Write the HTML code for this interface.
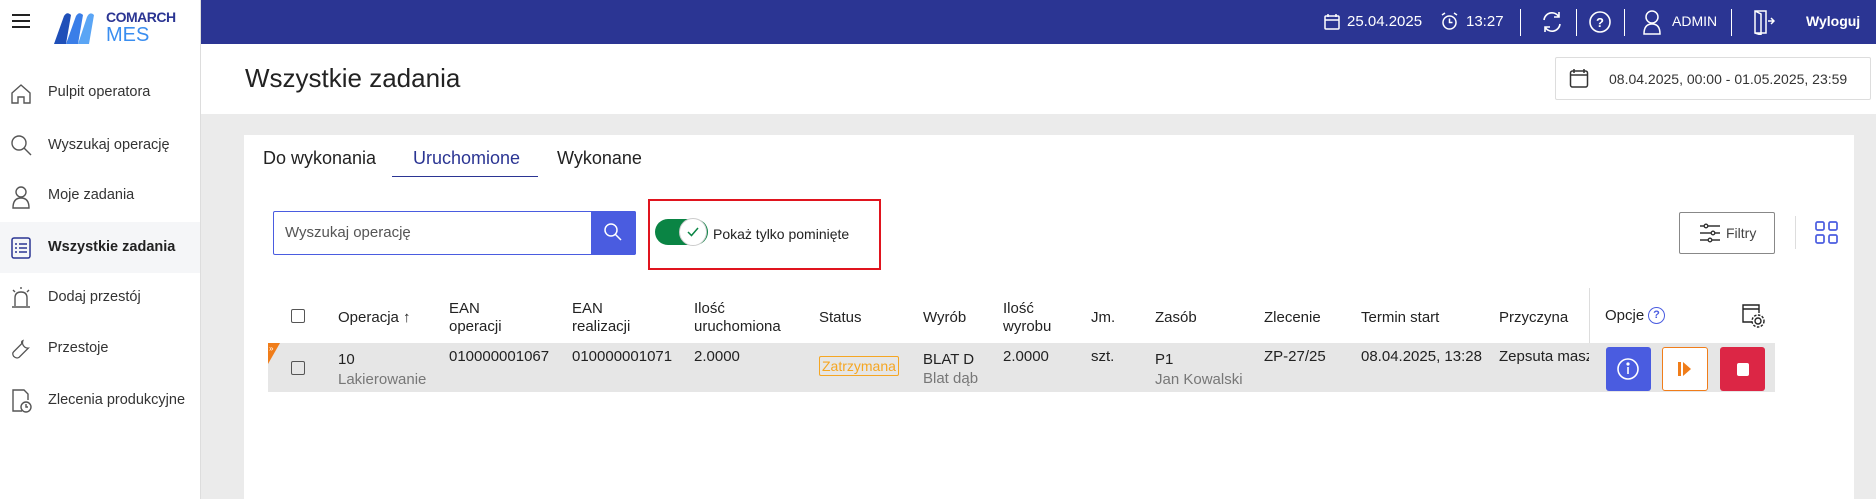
<!DOCTYPE html>
<html><head><meta charset="utf-8"><style>
*{margin:0;padding:0;box-sizing:border-box}
body{width:1876px;height:499px;overflow:hidden;font-family:"Liberation Sans",sans-serif;color:#222;background:#ebebeb;position:relative;font-size:15px}
.a{position:absolute;white-space:nowrap}
.hdr{left:0;top:0;width:1876px;height:44px;background:#2b3593}
.side{left:0;top:0;width:201px;height:499px;background:#fff;border-right:1px solid #ddd}
.wt{color:#fff;font-size:15px}
.vd{width:1px;height:27px;background:#fff;top:9px}
.nav{left:48px;font-size:14.5px;color:#333}
.th{font-size:15px;color:#222;line-height:18px}
.sub{color:#777}
</style></head><body>
<div class="a hdr"></div>
<div class="a side"></div>
<!-- logo -->
<div class="a" style="left:12px;top:14px;width:18px;height:2px;background:#222;box-shadow:0 6px 0 #222,0 12px 0 #222"></div>
<svg class="a" style="left:52px;top:11px" width="44" height="34" viewBox="0 0 44 34"><path d="M2 33 L12 5 Q15 0 19 4 L14 33 Z" fill="#1f4fb8"/><path d="M14 33 L24 5 Q27 0 31 4 L26 33Z" fill="#3a7ee8"/><path d="M26 33 L35 6 Q38 0 42 4 L37 33Z" fill="#5aa5f5"/></svg>
<div class="a" style="left:106px;top:9px;font-weight:bold;font-size:14px;color:#2b3593;letter-spacing:-0.5px">COMARCH</div>
<div class="a" style="left:106px;top:24px;font-size:20px;color:#3a8ef0">MES</div>
<!-- sidebar -->
<div class="a" style="left:0;top:222px;width:200px;height:51px;background:#f5f6f8"></div>
<svg class="a" style="left:9px;top:82px" width="24" height="24" viewBox="0 0 24 24" fill="none" stroke="#555" stroke-width="1.4"><path d="M3 11 L12 3 L21 11 V21 H15 V15 H9 V21 H3Z"/></svg>
<div class="a nav" style="top:84px">Pulpit operatora</div>
<svg class="a" style="left:9px;top:133px" width="24" height="24" viewBox="0 0 24 24" fill="none" stroke="#555" stroke-width="1.4"><circle cx="10" cy="10" r="7"/><path d="M15 15 L22 22"/></svg>
<div class="a nav" style="top:137px">Wyszukaj operację</div>
<svg class="a" style="left:10px;top:185px" width="22" height="24" viewBox="0 0 22 24" fill="none" stroke="#555" stroke-width="1.4"><circle cx="11" cy="7" r="5"/><path d="M3 23 Q3 13 11 13 Q19 13 19 23Z"/></svg>
<div class="a nav" style="top:187px">Moje zadania</div>
<svg class="a" style="left:10px;top:236px" width="22" height="24" viewBox="0 0 22 24" fill="none" stroke="#2b3593" stroke-width="1.5"><rect x="2" y="2" width="18" height="20" rx="2"/><path d="M5 8h2M9 8h8M5 12h2M9 12h8M5 16h2M9 16h8"/></svg>
<div class="a nav" style="top:239px;font-weight:bold;color:#222">Wszystkie zadania</div>
<svg class="a" style="left:10px;top:286px" width="22" height="24" viewBox="0 0 22 24" fill="none" stroke="#555" stroke-width="1.4"><path d="M5 20 V12 Q5 6 11 6 Q17 6 17 12 V20 M2 21 H20 M11 1 V3 M3 4 L5 6 M19 4 L17 6"/></svg>
<div class="a nav" style="top:289px">Dodaj przestój</div>
<svg class="a" style="left:10px;top:337px" width="22" height="24" viewBox="0 0 24 24" fill="none" stroke="#555" stroke-width="1.4"><path d="M14 3 A6 6 0 0 0 20 11 L10 21 Q7 23 4 20 Q2 17 4 15 L13 6 Q12 4 14 3Z"/></svg>
<div class="a nav" style="top:340px">Przestoje</div>
<svg class="a" style="left:10px;top:388px" width="22" height="26" viewBox="0 0 22 26" fill="none" stroke="#555" stroke-width="1.4"><path d="M12 23 H3 V2 H14 L18 6 V12"/><circle cx="16" cy="19" r="5"/><path d="M16 16v3h2"/></svg>
<div class="a nav" style="top:392px">Zlecenia produkcyjne</div>
<!-- top bar right -->
<svg class="a" style="left:1323px;top:13px" width="18" height="18" viewBox="0 0 18 18" fill="none" stroke="#fff" stroke-width="1.5"><rect x="2" y="3" width="14" height="13" rx="1"/><path d="M2 7h14M5 1v3M13 1v3"/></svg>
<div class="a wt" style="left:1347px;top:13px">25.04.2025</div>
<svg class="a" style="left:1440px;top:12px" width="19" height="19" viewBox="0 0 19 19" fill="none" stroke="#fff" stroke-width="1.5"><circle cx="9.5" cy="10.5" r="6.5"/><path d="M9.5 6.5v4h3M2 3l3-2M17 3l-3-2"/></svg>
<div class="a wt" style="left:1466px;top:13px">13:27</div>
<div class="a vd" style="left:1520px"></div>
<svg class="a" style="left:1540px;top:10px" width="24" height="24" viewBox="0 0 24 24" fill="none" stroke="#fff" stroke-width="1.6"><path d="M4 10 A8 8 0 0 1 19 7 M20 14 A8 8 0 0 1 5 17 M19 2v5h-5 M5 22v-5h5"/></svg>
<div class="a vd" style="left:1576px"></div>
<svg class="a" style="left:1588px;top:10px" width="24" height="24" viewBox="0 0 24 24" fill="none" stroke="#fff" stroke-width="1.6"><circle cx="12" cy="12" r="10"/><text x="12" y="17" text-anchor="middle" fill="#fff" stroke="none" font-size="13" font-weight="bold" font-family="Liberation Sans">?</text></svg>
<div class="a vd" style="left:1624px"></div>
<svg class="a" style="left:1642px;top:9px" width="20" height="26" viewBox="0 0 20 26" fill="none" stroke="#fff" stroke-width="1.5"><circle cx="10" cy="8" r="6"/><path d="M2 25 Q2 15 10 15 Q18 15 18 25Z"/></svg>
<div class="a wt" style="left:1672px;top:13px;font-size:14px">ADMIN</div>
<div class="a vd" style="left:1731px"></div>
<svg class="a" style="left:1753px;top:9px" width="22" height="26" viewBox="0 0 22 26" fill="none" stroke="#fff" stroke-width="1.5"><path d="M2 2 H13 V24 H2Z M2 2 L8 5 V26 L2 24 M15 12 H21 M18 9 L21 12 L18 15"/></svg>
<div class="a wt" style="left:1806px;top:13px;font-weight:bold;font-size:14px">Wyloguj</div>
<!-- title area -->
<div class="a" style="left:201px;top:44px;width:1675px;height:70px;background:#fff"></div>
<div class="a" style="left:245px;top:63px;font-size:26px;color:#222">Wszystkie zadania</div>
<div class="a" style="left:1555px;top:57px;width:316px;height:43px;border:1px solid #ddd;background:#fff;border-radius:2px"></div>
<svg class="a" style="left:1569px;top:68px" width="20" height="21" viewBox="0 0 20 21" fill="none" stroke="#333" stroke-width="1.5"><rect x="1.5" y="3" width="17" height="16" rx="2"/><path d="M1.5 7h17M5 1v4M15 1v4"/></svg>
<div class="a" style="left:1609px;top:71px;font-size:14px;color:#333">08.04.2025, 00:00 - 01.05.2025, 23:59</div>
<!-- card -->
<div class="a" style="left:244px;top:135px;width:1610px;height:364px;background:#fff"></div>
<div class="a" style="left:263px;top:148px;font-size:18px">Do wykonania</div>
<div class="a" style="left:413px;top:148px;font-size:18px;color:#2b3593">Uruchomione</div>
<div class="a" style="left:392px;top:176px;width:146px;height:1px;background:#2b3593"></div>
<div class="a" style="left:557px;top:148px;font-size:18px">Wykonane</div>
<!-- search -->
<div class="a" style="left:273px;top:211px;width:363px;height:44px;border:1px solid #4a5ce0;border-radius:2px"></div>
<div class="a" style="left:285px;top:224px;color:#555">Wyszukaj operację</div>
<div class="a" style="left:591px;top:211px;width:45px;height:44px;background:#4a5ce0;border-radius:0 2px 2px 0"></div>
<svg class="a" style="left:603px;top:222px" width="20" height="20" viewBox="0 0 20 20" fill="none" stroke="#fff" stroke-width="1.5"><circle cx="8" cy="8" r="6"/><path d="M12.5 12.5 L18 18"/></svg>
<!-- toggle -->
<div class="a" style="left:648px;top:199px;width:233px;height:71px;border:2px solid #e0141e"></div>
<div class="a" style="left:655px;top:219px;width:53px;height:26px;background:#0a8444;border-radius:13px"></div>
<div class="a" style="left:679px;top:218px;width:28px;height:28px;background:#fff;border-radius:14px;border:1px solid #ccc"></div>
<svg class="a" style="left:686px;top:226px" width="14" height="12" viewBox="0 0 14 12" fill="none" stroke="#0a8444" stroke-width="1.5"><path d="M2 6 L5.5 9.5 L12 2"/></svg>
<div class="a" style="left:713px;top:226px;font-size:14px;color:#222">Pokaż tylko pominięte</div>
<!-- filtry -->
<div class="a" style="left:1679px;top:212px;width:96px;height:42px;border:1px solid #888;border-radius:2px"></div>
<svg class="a" style="left:1699px;top:222px" width="22" height="22" viewBox="0 0 22 22" fill="none" stroke="#333" stroke-width="1.4"><path d="M1 4h20M1 11h20M1 18h20"/><circle cx="7" cy="4" r="1.8" fill="#fff"/><circle cx="14" cy="11" r="1.8" fill="#fff"/><circle cx="11" cy="18" r="1.8" fill="#fff"/></svg>
<div class="a" style="left:1726px;top:225px;color:#444;font-size:14px">Filtry</div>
<div class="a" style="left:1795px;top:216px;width:1px;height:33px;background:#ddd"></div>
<svg class="a" style="left:1815px;top:221px" width="23" height="23" viewBox="0 0 23 23" fill="none" stroke="#4a5ce0" stroke-width="1.7"><rect x="1" y="1" width="8" height="8" rx="1.5"/><rect x="14" y="1" width="8" height="8" rx="1.5"/><rect x="1" y="14" width="8" height="8" rx="1.5"/><rect x="14" y="14" width="8" height="8" rx="1.5"/></svg>
<!-- table header -->
<div class="a" style="left:1589px;top:288px;width:1px;height:104px;background:#ddd"></div>
<div class="a" style="left:291px;top:309px;width:14px;height:14px;border:1.5px solid #555;border-radius:2px"></div>
<div class="a th" style="left:338px;top:309px">Operacja ↑</div>
<div class="a th" style="left:449px;top:300px">EAN<br>operacji</div>
<div class="a th" style="left:572px;top:300px">EAN<br>realizacji</div>
<div class="a th" style="left:694px;top:300px">Ilość<br>uruchomiona</div>
<div class="a th" style="left:819px;top:309px">Status</div>
<div class="a th" style="left:923px;top:309px">Wyrób</div>
<div class="a th" style="left:1003px;top:300px">Ilość<br>wyrobu</div>
<div class="a th" style="left:1091px;top:309px">Jm.</div>
<div class="a th" style="left:1155px;top:309px">Zasób</div>
<div class="a th" style="left:1264px;top:309px">Zlecenie</div>
<div class="a th" style="left:1361px;top:309px">Termin start</div>
<div class="a th" style="left:1499px;top:309px">Przyczyna</div>
<div class="a th" style="left:1605px;top:307px">Opcje</div>
<div class="a" style="left:1648px;top:307px;width:17px;height:17px;border:1.5px solid #4a5ce0;border-radius:50%;color:#4a5ce0;font-size:11px;text-align:center;line-height:14px;font-weight:bold">?</div>
<svg class="a" style="left:1740px;top:303px" width="26" height="26" viewBox="0 0 26 26" fill="none" stroke="#222" stroke-width="1.4"><path d="M12 19 H3 V2 H19 V10 M3 6 H19"/><circle cx="18" cy="18" r="3"/><circle cx="18" cy="18" r="6" stroke-dasharray="2.5 1.5"/></svg>
<!-- row -->
<div class="a" style="left:268px;top:343px;width:1507px;height:49px;background:#e6e6e6"></div>
<svg class="a" style="left:268px;top:343px" width="12" height="21"><path d="M0 0 H12 L0 21Z" fill="#f07d1a"/><text x="1" y="8" fill="#fff" font-size="8" font-family="Liberation Sans">»</text></svg>
<div class="a" style="left:291px;top:361px;width:14px;height:14px;border:1.5px solid #555;border-radius:2px"></div>
<div class="a" style="left:338px;top:351px">10</div>
<div class="a sub" style="left:338px;top:371px">Lakierowanie</div>
<div class="a" style="left:449px;top:348px">010000001067</div>
<div class="a" style="left:572px;top:348px">010000001071</div>
<div class="a" style="left:694px;top:348px">2.0000</div>
<div class="a" style="left:819px;top:356px;border:1px solid #f5a623;color:#f5a623;padding:1px 2px;font-size:14px;border-radius:2px">Zatrzymana</div>
<div class="a" style="left:923px;top:351px">BLAT D</div>
<div class="a sub" style="left:923px;top:370px">Blat dąb</div>
<div class="a" style="left:1003px;top:348px">2.0000</div>
<div class="a" style="left:1091px;top:348px">szt.</div>
<div class="a" style="left:1155px;top:351px">P1</div>
<div class="a sub" style="left:1155px;top:371px">Jan Kowalski</div>
<div class="a" style="left:1264px;top:348px">ZP-27/25</div>
<div class="a" style="left:1361px;top:348px">08.04.2025, 13:28</div>
<div class="a" style="left:1499px;top:348px;width:90px;overflow:hidden">Zepsuta maszyna</div>
<div class="a" style="left:1590px;top:343px;width:185px;height:49px;background:#e6e6e6"></div>
<div class="a" style="left:1606px;top:347px;width:45px;height:44px;background:#4a5ce0;border-radius:3px"></div>
<svg class="a" style="left:1616px;top:357px" width="24" height="24" viewBox="0 0 24 24" fill="none" stroke="#fff" stroke-width="1.6"><circle cx="12" cy="12" r="10"/><path d="M12 10v7"/><circle cx="12" cy="7" r="0.8" fill="#fff"/></svg>
<div class="a" style="left:1662px;top:347px;width:46px;height:44px;background:#fff;border:1px solid #f07d1a;border-radius:3px"></div>
<svg class="a" style="left:1678px;top:361px" width="14" height="16"><rect x="0" y="1" width="3" height="14" fill="#f07d1a"/><path d="M5 1 L13 8 L5 15Z" fill="#f07d1a"/></svg>
<div class="a" style="left:1720px;top:347px;width:45px;height:44px;background:#dc2645;border-radius:3px"></div>
<div class="a" style="left:1737px;top:363px;width:12px;height:13px;background:#fff;border-radius:2px"></div>
</body></html>
